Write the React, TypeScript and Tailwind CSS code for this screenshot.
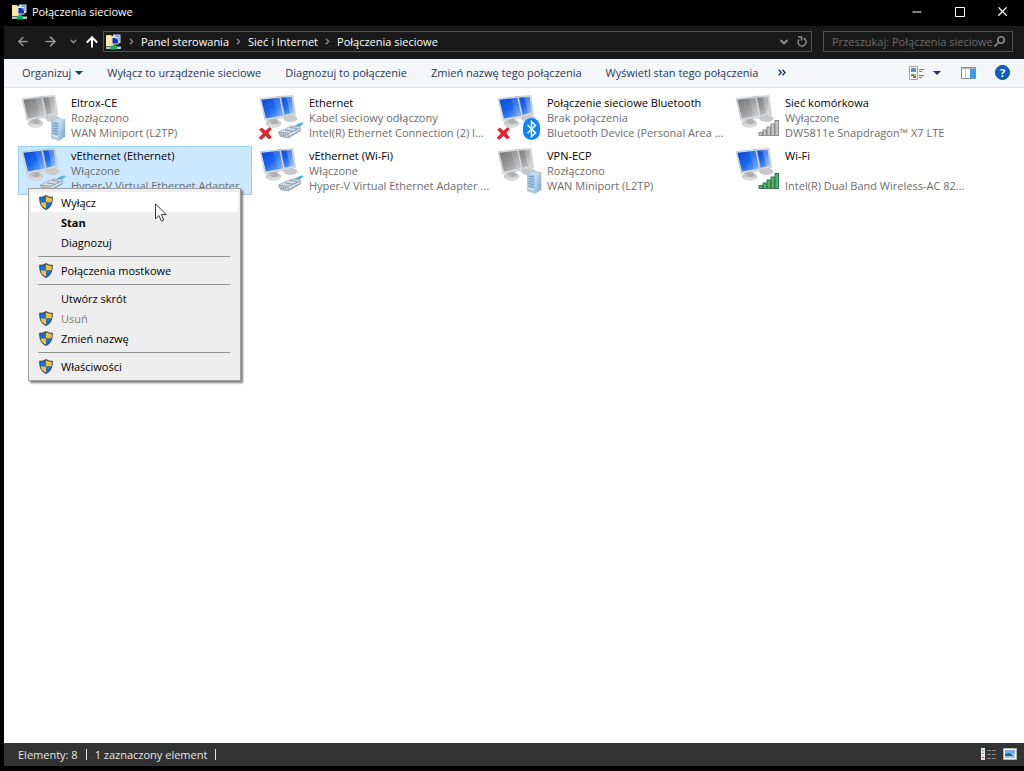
import type { ReactNode } from "react";
import clsx from "clsx";
import { ArrowLeft, ArrowRight, ArrowUp, ChevronDown, ChevronRight, Minus, X } from "lucide-react";

type Badge = "server" | "plug" | "bluetooth" | "signal" | "signalOff";

type Connection = {
  name: string;
  status: string;
  device: string;
  active: boolean;
  badge: Badge;
  error?: boolean;
  selected?: boolean;
};

const connections: Connection[] = [
  { name: "Eltrox-CE", status: "Rozłączono", device: "WAN Miniport (L2TP)", active: false, badge: "server" },
  { name: "Ethernet", status: "Kabel sieciowy odłączony", device: "Intel(R) Ethernet Connection (2) I...", active: true, badge: "plug", error: true },
  { name: "Połączenie sieciowe Bluetooth", status: "Brak połączenia", device: "Bluetooth Device (Personal Area ...", active: true, badge: "bluetooth", error: true },
  { name: "Sieć komórkowa", status: "Wyłączone", device: "DW5811e Snapdragon™ X7 LTE", active: false, badge: "signalOff" },
  { name: "vEthernet (Ethernet)", status: "Włączone", device: "Hyper-V Virtual Ethernet Adapter", active: true, badge: "plug", selected: true },
  { name: "vEthernet (Wi-Fi)", status: "Włączone", device: "Hyper-V Virtual Ethernet Adapter ...", active: true, badge: "plug" },
  { name: "VPN-ECP", status: "Rozłączono", device: "WAN Miniport (L2TP)", active: false, badge: "server" },
  { name: "Wi-Fi", status: "", device: "Intel(R) Dual Band Wireless-AC 82...", active: true, badge: "signal" },
];

const crumbs = ["Panel sterowania", "Sieć i Internet", "Połączenia sieciowe"];

const commands = [
  "Wyłącz to urządzenie sieciowe",
  "Diagnozuj to połączenie",
  "Zmień nazwę tego połączenia",
  "Wyświetl stan tego połączenia",
];

type MenuEntry = { label: string; shield?: boolean; bold?: boolean; disabled?: boolean; hover?: boolean };

const menuGroups: MenuEntry[][] = [
  [{ label: "Wyłącz", shield: true, hover: true }, { label: "Stan", bold: true }, { label: "Diagnozuj" }],
  [{ label: "Połączenia mostkowe", shield: true }],
  [{ label: "Utwórz skrót" }, { label: "Usuń", shield: true, disabled: true }, { label: "Zmień nazwę", shield: true }],
  [{ label: "Właściwości", shield: true }],
];

function FolderIcon() {
  return (
    <svg width="16" height="16" viewBox="0 0 16 16" className="shrink-0" aria-hidden="true">
      <path d="M0 1h5l1 1h3v10H0z" fill="#ecd27a" />
      <path d="M0 2h5v10H0z" fill="#faeaa8" />
      <path d="M7 .5h7.500V9H7z" fill="#cfdcf0" />
      <path d="M9.500 1.500h4V7h-4z" fill="#6f93e4" />
      <path d="M5.500 3h7v7.500h-7z" fill="#dfe8f8" />
      <path d="M6.500 4H12v5.500H6.500z" fill="#1226c4" />
      <path d="M9 4h3v3z" fill="#6d8cf0" />
      <path d="M7 10.500h3V13H7z" fill="#15a060" />
      <path d="M0 12.500h15V15H0z" fill="#b9c8c6" />
      <path d="M4.500 12h6.500v3.500H4.500z" fill="#12b36b" />
    </svg>
  );
}

// screen gradients shared by all connection icons
function IconDefs() {
  return (
    <svg width="0" height="0" className="absolute" aria-hidden="true">
      <defs>
        <linearGradient id="screen-on" x1="0" y1="0" x2="1" y2="1">
          <stop offset="0" stopColor="#0b46cc" />
          <stop offset=".5" stopColor="#1c66ee" />
          <stop offset="1" stopColor="#7db8fc" />
        </linearGradient>
        <linearGradient id="screen-off" x1="0" y1="0" x2="1" y2="1">
          <stop offset="0" stopColor="#767676" />
          <stop offset=".5" stopColor="#989898" />
          <stop offset="1" stopColor="#d2d2d2" />
        </linearGradient>
        <linearGradient id="stand" x1="0" y1="0" x2="0" y2="1">
          <stop offset="0" stopColor="#b4b4b4" />
          <stop offset="1" stopColor="#e6e6e6" />
        </linearGradient>
        <linearGradient id="server-side" x1="0" y1="0" x2="1" y2="1">
          <stop offset="0" stopColor="#d4e8f7" />
          <stop offset="1" stopColor="#6f9fc8" />
        </linearGradient>
      </defs>
    </svg>
  );
}

function Monitor({ active }: { active: boolean }) {
  const screen = active ? "url(#screen-on)" : "url(#screen-off)";
  return (
    <>
      <ellipse cx="30.500" cy="24.500" rx="7" ry="3.500" fill="#cacaca" />
      <path d="M17 2.500L33 1.600 35.500 20.500l-12 3.200z" fill="#d6d8da" stroke="#b4b8bc" strokeWidth=".5" />
      <path d="M18 3.800l13.600-.8L33.700 18.500 24 21z" fill={screen} />
      <path d="M26.500 3.300l5.100-.3 2.100 15.500-3.500.9z" fill="#fff" opacity=".25" />
      <ellipse cx="13.500" cy="29.500" rx="7.500" ry="3.900" fill="url(#stand)" stroke="#bebebe" strokeWidth=".5" />
      <path d="M10 24.500l6-1 2 5.500c-2 1.500-5 1.500-6.500.500z" fill="#b0b0b0" />
      <path d="M0 4.600L20.500 2.400l4.600 20.800L5 26.500z" fill="#dcdee0" stroke="#b0b4b8" strokeWidth=".5" />
      <path d="M1.400 5.700l18-1.900 3.800 17.700L6 24.400z" fill={screen} />
      <path d="M13 4.500l6.400-.7 3.800 17.700-4.700.8z" fill="#fff" opacity=".12" />
    </>
  );
}

function BadgeShape({ badge }: { badge: Badge }) {
  if (badge === "server") {
    return (
      <>
        <path d="M29.500 26.500L35 24l8 1.500v17L37 46.500l-7.500-2.500z" fill="#c3dcef" stroke="#8fb3d0" strokeWidth=".5" />
        <path d="M29.500 26.500l7.500 1.700v18.300L29.500 44z" fill="#a8cbe6" />
        <path d="M37 28.200l6-2.700v17L37 46.500z" fill="url(#server-side)" />
        <path d="M30.500 29l5.500 1.200M30.500 31.500l5.500 1.200M30.500 34l5.500 1.200M30.500 36.500l5.500 1.200M30.500 39l5.500 1.200" stroke="#5f92be" strokeWidth=".9" />
        <path d="M30.500 41.500l5.500 1.500" stroke="#eef7fd" strokeWidth="1" />
      </>
    );
  }
  if (badge === "bluetooth") {
    return (
      <>
        <rect x="25" y="24" width="17" height="22" rx="8.500" fill="#0a84ff" />
        <path d="M29.500 31l8 7.800-4 4V27.500l4 4-8 7.800" fill="none" stroke="#fff" strokeWidth="1.500" />
      </>
    );
  }
  if (badge === "plug") {
    return (
      <>
        <path d="M34 32c3-1.500 5-3.500 9-3.500l.5 1.500c-3 1-3 3.500-7 5z" fill="#58b4dc" />
        <path d="M18.500 38L31 32l9 .5 1 4-11 6.500-8.500-1z" fill="#d7e0e9" stroke="#8c9cac" strokeWidth=".6" />
        <path d="M18.500 38l9 1 1.500 5-8.500-1.500z" fill="#c3cdd8" stroke="#75879a" strokeWidth=".6" />
        <path d="M21 39.500l.7 2.500M23 39.700l.7 2.500M25 40l.7 2.500" stroke="#b39a3c" strokeWidth="1" />
        <path d="M28 39.500l12-5.500M25 36l7.500 1M30 33.500l7 1M29.500 42.500L40 36.500" stroke="#70879f" strokeWidth=".8" />
      </>
    );
  }
  const fill = badge === "signal" ? "#58ae74" : "#c4c4c4";
  const stroke = badge === "signal" ? "#23733f" : "#848484";
  return (
    <g fill={fill} stroke={stroke} strokeWidth=".9">
      <rect x="23" y="38.500" width="3.500" height="3" />
      <rect x="27" y="36" width="3.500" height="5.500" />
      <rect x="31" y="33" width="3.500" height="8.500" />
      <rect x="35" y="30" width="3.500" height="11.500" />
      <rect x="39" y="26.500" width="3.500" height="15" />
    </g>
  );
}

function ConnectionIcon({ connection }: { connection: Connection }) {
  return (
    <svg width="48" height="48" viewBox="0 0 48 48" className="shrink-0 overflow-visible" aria-hidden="true">
      <Monitor active={connection.active} />
      <BadgeShape badge={connection.badge} />
      {connection.error && (
        <path d="M-.5 35.500l2.500-1.500 3.500 3 4-3.500 2 1.500-3.500 4 3.500 4.500-2.500 1.500-3.500-3.500-4 4L-1 44l4-4.500z" fill="#e3262c" stroke="#b01218" strokeWidth=".5" />
      )}
    </svg>
  );
}

function Shield() {
  return (
    <svg width="14" height="15" viewBox="0 0 14 15" aria-hidden="true">
      <path d="M7 0c2 1.300 4 1.800 6.800 1.800C14 8 12.500 12.500 7 15 1.500 12.500 0 8 .2 1.800 3 1.800 5 1.300 7 0z" fill="#3c4854" />
      <path d="M7 1.300v6.200H1.500C1.200 6 1.200 4.400 1.200 2.900 3.400 2.800 5.300 2.300 7 1.300z" fill="#1270d6" />
      <path d="M7 1.300c1.700 1 3.600 1.500 5.800 1.600 0 1.500 0 3.100-.3 4.600H7z" fill="#fdbf32" />
      <path d="M1.500 7.500H7v6.300C3.900 12.400 2.200 10.300 1.500 7.500z" fill="#fdbf32" />
      <path d="M12.500 7.500H7v6.300c3.100-1.400 4.800-3.500 5.500-6.300z" fill="#1270d6" />
    </svg>
  );
}

function Caret() {
  return (
    <svg width="8" height="4" viewBox="0 0 8 4" aria-hidden="true">
      <path d="M0 0h8L4 4z" fill="#1e395b" />
    </svg>
  );
}

function IconButton({ label, className, children }: { label: string; className?: string; children: ReactNode }) {
  return (
    <button type="button" aria-label={label} className={clsx("flex items-center justify-center shrink-0", className)}>
      {children}
    </button>
  );
}

function ContextMenu() {
  return (
    <div role="menu" className="absolute left-6 top-[100px] w-[213px] bg-[#eeeeee] border border-[#a0a0a0] pt-[3px] pb-1 px-[2px] shadow-[2px_2px_2px_rgba(0,0,0,0.5)] text-black">
      {menuGroups.map((group, i) => (
        <div key={i}>
          {i > 0 && <div role="separator" className="h-px mt-1 mb-[3px] ml-[7px] mr-2 bg-[#919191]" />}
          {group.map((entry) => (
            <button
              key={entry.label}
              type="button"
              role="menuitem"
              disabled={entry.disabled}
              className={clsx(
                "flex items-center w-full h-5 text-left",
                entry.hover && "bg-white",
                entry.bold && "font-bold",
                entry.disabled && "text-[#7d7d7d]",
              )}
            >
              <span className="w-[30px] pl-2 shrink-0">{entry.shield && <Shield />}</span>
              {entry.label}
            </button>
          ))}
        </div>
      ))}
      <svg width="12" height="19" viewBox="0 0 12 19" className="absolute left-[126px] top-[14px]" aria-hidden="true">
        <path d="M.5 .8v15l3.400-3.300 2.500 5.500 2.300-1-2.400-5.400h4.900z" fill="#fff" stroke="#222" strokeWidth=".9" />
      </svg>
    </div>
  );
}

export default function App() {
  return (
    <div className="min-h-screen flex flex-col bg-black pl-1 pb-[5px] font-['Open_Sans','Noto_Sans',sans-serif] text-[11px] leading-[15px]">
      <IconDefs />
      <header className="flex items-center h-[26px] pb-[3px] text-white">
        <div className="flex items-center gap-1 pl-2 flex-1">
          <FolderIcon />
          <h1>Połączenia sieciowe</h1>
        </div>
        <IconButton label="Minimalizuj" className="w-[42px]"><Minus size={14} strokeWidth={2} /></IconButton>
        <IconButton label="Maksymalizuj" className="w-[43px]">
          <svg width="10" height="10" viewBox="0 0 10 10" aria-hidden="true">
            <path d="M.5 .5h9v9h-9z" fill="none" stroke="#fff" />
          </svg>
        </IconButton>
        <IconButton label="Zamknij" className="w-[43px]"><X size={15} strokeWidth={2} /></IconButton>
      </header>

      <div className="flex items-center h-[33px] pb-[2px] bg-[#191919] text-white pr-[11px]">
        <nav className="flex items-center gap-2 pl-3 pr-1">
          <IconButton label="Wstecz" className="w-[14px] text-[#9a9a9a]"><ArrowLeft size={15} strokeWidth={2.500} /></IconButton>
          <IconButton label="Dalej" className="w-6 text-[#9a9a9a]"><ArrowRight size={15} strokeWidth={2.500} /></IconButton>
          <IconButton label="Ostatnie lokalizacje" className="w-[7px] text-[#8a8a8a]"><ChevronDown size={9} strokeWidth={4} className="shrink-0" /></IconButton>
          <IconButton label="W górę" className="w-[14px]"><ArrowUp size={16} strokeWidth={3} className="shrink-0" /></IconButton>
        </nav>
        <div className="flex items-center flex-1 h-[21px] border border-[#535353] pl-[2px]">
          <FolderIcon />
          <ol className="flex items-center flex-1">
            {crumbs.map((c) => (
              <li key={c} className="flex items-center">
                <ChevronRight size={9} strokeWidth={4} className="mx-[5px] text-[#8a8a8a]" />
                <a href="#">{c}</a>
              </li>
            ))}
          </ol>
          <IconButton label="Poprzednie lokalizacje" className="w-[18px] text-[#8a8a8a]"><ChevronDown size={12} strokeWidth={4} /></IconButton>
          <IconButton label="Odśwież" className="w-[18px] text-[#8a8a8a]">
            <svg width="10" height="11" viewBox="0 0 10 11" fill="none" stroke="currentColor" strokeWidth="1.500" aria-hidden="true">
              <path d="M6.500 2.200A4 4 0 1 1 2 3.400" />
              <path d="M1 1h3.500v3.500" />
            </svg>
          </IconButton>
        </div>
        <div className="flex items-center w-[190px] h-[21px] ml-[11px] border border-[#535353] pl-2 pr-[7px] text-[#8a8a8a]">
          <input type="text" aria-label="Przeszukaj" placeholder="Przeszukaj: Połączenia sieciowe" className="flex-1 min-w-0 bg-transparent outline-none placeholder:text-[#6b6b6b]" />
          <svg width="11" height="11" viewBox="0 0 11 11" fill="none" stroke="currentColor" strokeWidth="1.600" className="shrink-0" aria-hidden="true">
            <circle cx="7" cy="4" r="3.200" />
            <path d="M4.700 6.300L.6 10.400" />
          </svg>
        </div>
      </div>

      <div className="flex items-center h-[29px] pb-px bg-[#f5f6f7] border-b border-[#e4e6e8] text-[#1e395b] pl-[18px] pr-[14px] whitespace-nowrap">
        <div className="flex items-center gap-6 flex-1">
          <button type="button" className="flex items-center gap-1">Organizuj <Caret /></button>
          {commands.map((c) => (
            <button key={c} type="button">{c}</button>
          ))}
          <button type="button" aria-label="Więcej poleceń" className="-ml-1">
            <svg width="8" height="7" viewBox="0 0 8 7" aria-hidden="true">
              <path d="M.7 .7l2.600 2.800L.7 6.300M4.500 .7l2.600 2.800-2.600 2.800" fill="none" stroke="#1e395b" strokeWidth="1.400" />
            </svg>
          </button>
        </div>
        <IconButton label="Zmień widok" className="gap-[9px]">
          <svg width="15" height="14" viewBox="0 0 15 14" aria-hidden="true">
            <path d="M.5 .5h8v13h-8z" fill="#fff" stroke="#a0a0a0" />
            <path d="M2 2h5v3.500H2z" fill="#4e9be0" />
            <path d="M2 4.500h5v1H2z" fill="#3c7a4c" />
            <path d="M2 8h3v2H2z" fill="#3fa34d" />
            <path d="M4 10h3v2H4z" fill="#d94b3a" />
            <path d="M5 8h2v2H5z" fill="#f2c037" />
            <path d="M10 3.500h5M10 5.500h3M10 9.500h5M10 11.500h3" stroke="#777" />
          </svg>
          <Caret />
        </IconButton>
        <IconButton label="Okienko podglądu" className="ml-5">
          <svg width="15" height="12" viewBox="0 0 15 12" aria-hidden="true">
            <path d="M.5 .5h14v11H.5z" fill="#fff" stroke="#8c8c8c" />
            <path d="M1 1h13v1H1z" fill="#b8b8b8" />
            <path d="M4.500 2v9" stroke="#c4c4c4" />
            <path d="M9 2h5v9H9z" fill="#3f9be8" />
          </svg>
        </IconButton>
        <IconButton label="Pomoc" className="ml-[19px] w-[15px] h-[15px] rounded-full bg-[#0a63c2] border border-[#084a94] text-white font-bold">?</IconButton>
      </div>

      <main className="relative flex-1 bg-white px-[14px] pt-[5px]">
        <ul className="grid grid-cols-[repeat(auto-fill,234px)] gap-1">
          {connections.map((c) => (
            <li
              key={c.name}
              className={clsx("flex h-[49px] border pl-[3px]", c.selected ? "bg-[#cce8ff] border-[#99d1ff]" : "border-transparent")}
            >
              <ConnectionIcon connection={c} />
              <div className="pl-px pt-px min-w-0 whitespace-nowrap text-[#6d6d6d]">
                <p className="text-black">{c.name}</p>
                <p className="h-[15px]">{c.status}</p>
                <p>{c.device}</p>
              </div>
            </li>
          ))}
        </ul>
        <ContextMenu />
      </main>

      <footer className="flex items-center h-[23px] bg-[#333333] text-[#e6e6e6] pl-[14px] pr-[7px]">
        <span className="pr-2 border-r border-[#e6e6e6] leading-[11px]">Elementy: 8</span>
        <span className="px-2 border-r border-[#e6e6e6] leading-[11px]">1 zaznaczony element</span>
        <div className="flex gap-[7px] ml-auto pb-[2px]">
          <IconButton label="Szczegóły">
            <svg width="15" height="12" viewBox="0 0 15 12" aria-hidden="true">
              <path d="M0 0h4v12H0z" fill="#e8e8e8" />
              <path d="M1 2h2v1H1zM1 5h2v1H1z" fill="#6aa5a0" />
              <path d="M1 9h2v1H1z" fill="#e04040" />
              <path d="M6 2.500h4M11 2.500h4M6 6.500h4M11 6.500h4M6 10.500h4M11 10.500h4" stroke="#858585" />
            </svg>
          </IconButton>
          <IconButton label="Duże ikony">
            <svg width="14" height="12" viewBox="0 0 14 12" aria-hidden="true">
              <path d="M.5 .5h13v11H.5z" fill="#fff" stroke="#b5b5b5" />
              <path d="M2 2h10v4H2z" fill="#6cb2ee" />
              <path d="M2 6l4-1 6 3v2H2z" fill="#2d5f8f" />
              <path d="M2 8h10v2H2z" fill="#9cc8ee" />
            </svg>
          </IconButton>
        </div>
      </footer>
    </div>
  );
}
